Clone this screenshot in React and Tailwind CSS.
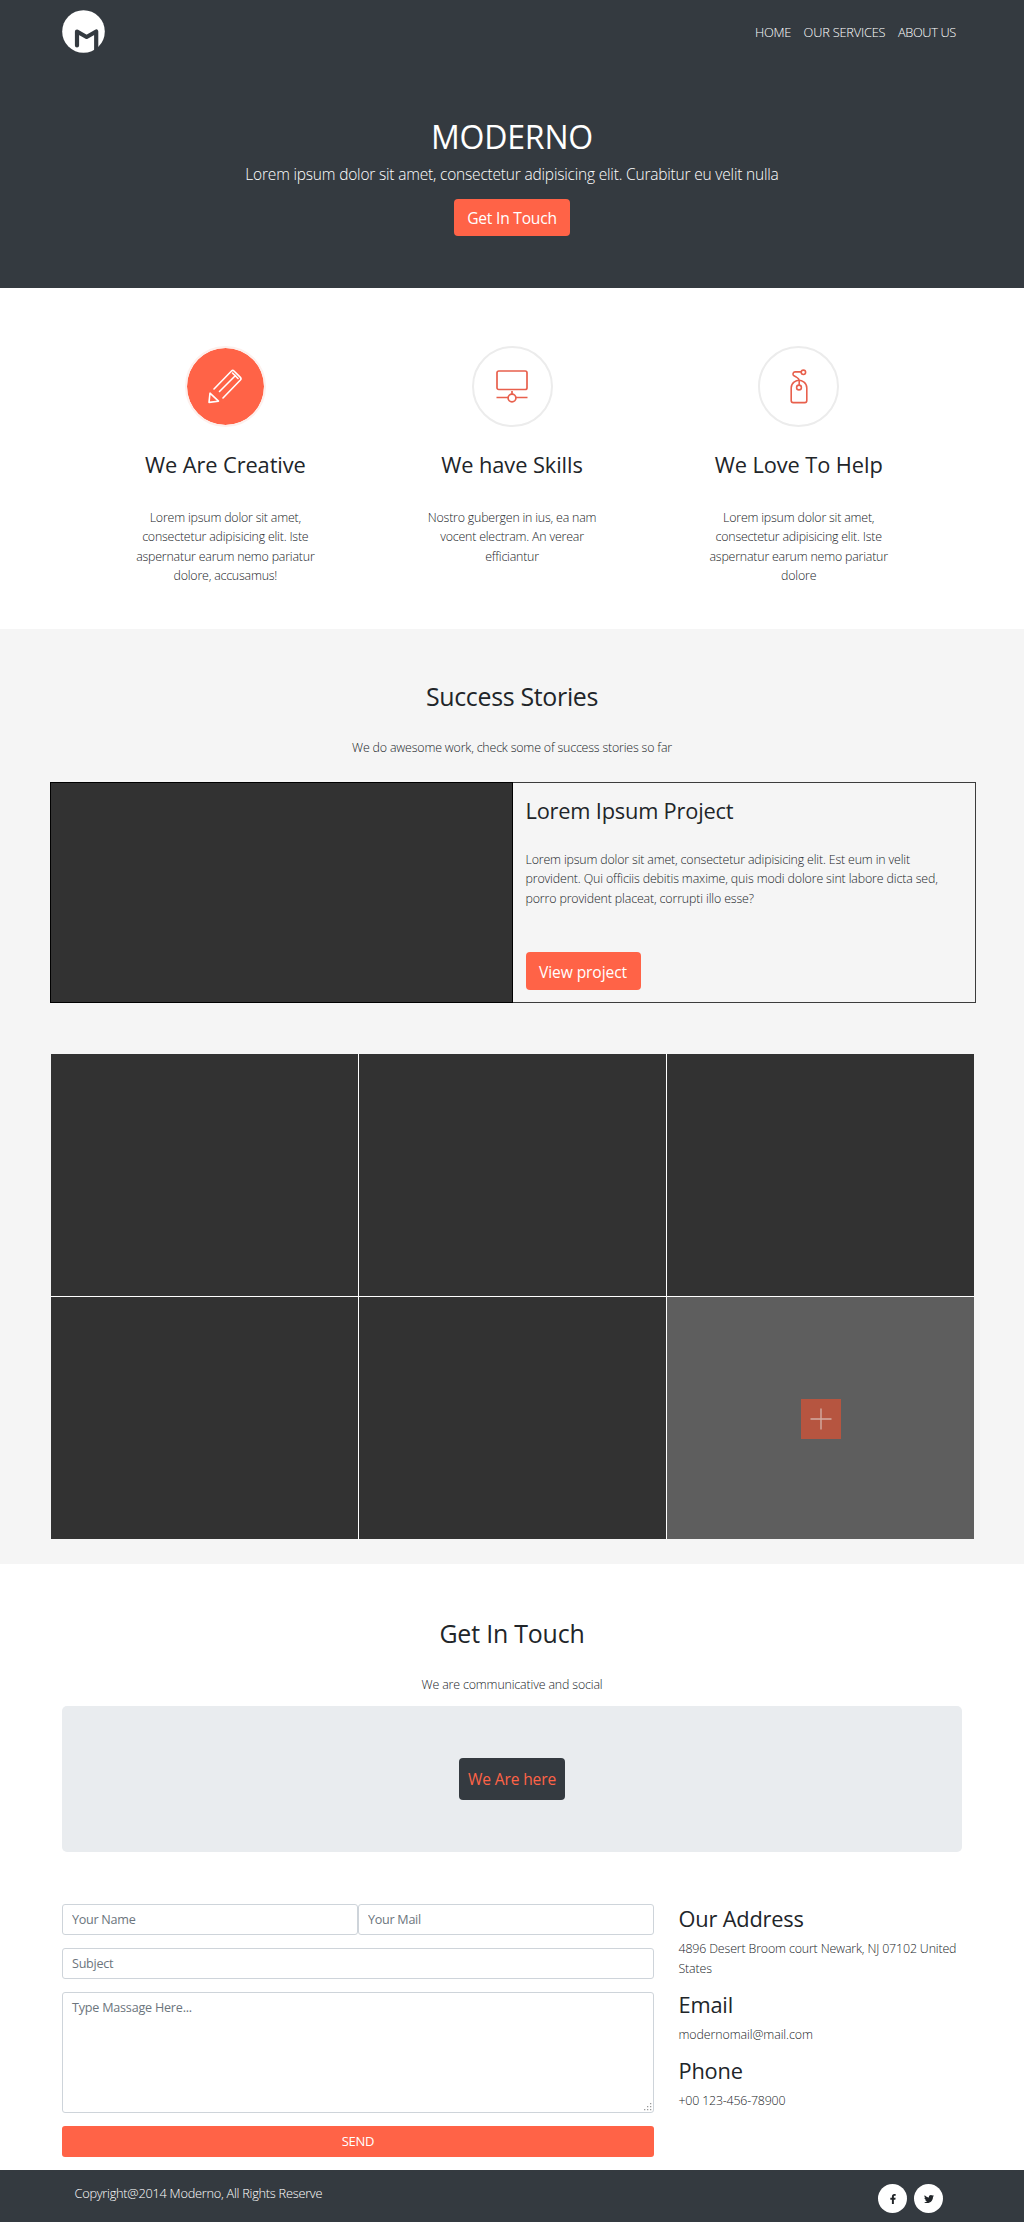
import React from "react";
import { FaFacebookF, FaTwitter } from "react-icons/fa";

function Logo() {
  return (
    <svg width="43" height="43" viewBox="0 0 43 43" fill="none">
      <circle cx="21.5" cy="21.5" r="21.3" fill="#fff" />
      <path
        d="M15 35.5V21.5L24.6 27L34.2 21.5V42"
        stroke="#343a40"
        strokeWidth="4.2"
        strokeLinecap="round"
        strokeLinejoin="round"
      />
    </svg>
  );
}

function PencilIcon() {
  return (
    <svg width="34" height="35" viewBox="0 0 34 35" fill="none" stroke="#fff" strokeWidth="1.6" strokeLinecap="round" strokeLinejoin="round">
      <path d="M6 20L23.5 2Q24.8 .8 26 2L32.4 8.4Q33.6 9.7 32.4 11L15 29" />
      <path d="M11.5 22.5L27.5 6.5M24.5 4L30 9.5" />
      <path d="M2 24.2L1 33.4L10.5 32.2Z" />
    </svg>
  );
}

function NetworkIcon() {
  return (
    <svg width="32" height="33" viewBox="0 0 32 33" fill="none" stroke="#e8604d" strokeWidth="1.7">
      <rect x="1" y="1" width="30" height="18.5" rx="1.8" />
      <path d="M16 21V24M.5 27.5H12M20 27.5H31.5" />
      <circle cx="16" cy="28" r="3.9" />
    </svg>
  );
}

function TagIcon() {
  return (
    <svg width="18" height="35" viewBox="0 0 18 35" fill="none" stroke="#e8604d" strokeWidth="1.6" strokeLinejoin="round">
      <path d="M1.2 19Q1.2 15.5 4 13.2Q9 9.2 14 13.2Q16.8 15.5 16.8 19V31.5Q16.8 33.6 14.8 33.6H3.2Q1.2 33.6 1.2 31.5Z" />
      <circle cx="9" cy="18.5" r="2.4" />
      <path d="M9.2 16V12Q9.2 9.6 6.8 8.4L4 6.8Q2.8 6 3 4.8Q3.2 3 5 2.9H11" />
      <circle cx="13.4" cy="3.3" r="2.2" />
    </svg>
  );
}

function Feature({ icon, active, title, lines }) {
  return (
    <div className="flex flex-1 flex-col items-center text-center">
      <div
        className={
          active
            ? "flex size-[81px] items-center justify-center rounded-full border-2 border-[#fdf0ed] bg-[#ff6347] bg-clip-padding"
            : "flex size-[81px] items-center justify-center rounded-full border-2 border-[#ececec]"
        }
      >
        {icon}
      </div>
      <h3 className="mt-[24px] text-[21.8px] leading-[27px] tracking-[-0.08px] text-[#212529]">{title}</h3>
      <p className="mt-[30px] text-[12.4px] leading-[19.5px] font-light tracking-[-0.2px] text-[#212529]">
        {lines.map((l) => (
          <span key={l} className="block whitespace-nowrap">{l}</span>
        ))}
      </p>
    </div>
  );
}

const fieldBox = "h-[31px] rounded-[3px] border border-[#ced4da] bg-white px-[9px] text-[12.6px] tracking-[-0.28px] text-[#212529] outline-none placeholder:text-[#6c757d]";
const bodyText = "text-[12.4px] leading-[19.5px] font-light text-[#212529]";
const infoTitle = "text-[21.8px] leading-[27px] text-[#212529] tracking-[-0.18px]";

export default function App() {
  return (
    <div className="h-[2222px] w-full overflow-hidden bg-white font-['Open_Sans','Noto_Sans',sans-serif] whitespace-nowrap">
      <header className="h-[287.5px] bg-[#343a40] text-white">
        <nav className="flex h-[63px] items-center justify-between pr-[68px] pl-[62px]">
          <Logo />
          <div className="flex gap-[12.5px] pt-[3px] text-[12.8px] leading-[19.5px] font-light">
            <a className="tracking-[-0.25px]">HOME</a>
            <a className="tracking-[-0.2px]">OUR SERVICES</a>
            <a className="tracking-[-0.35px]">ABOUT US</a>
          </div>
        </nav>
        <div className="flex flex-col items-center pt-[54px]">
          <h1 className="text-[32px] leading-[39px] tracking-[-0.2px]">MODERNO</h1>
          <p className="mt-[6px] text-[15.5px] leading-6 font-light tracking-[-0.19px]">
            Lorem ipsum dolor sit amet, consectetur adipisicing elit. Curabitur eu velit nulla
          </p>
          <button className="mt-[12.5px] h-[37.5px] w-[116px] rounded-[4px] bg-[#ff6347] pt-px text-[15.6px] leading-6 tracking-[-0.22px]">
            Get In Touch
          </button>
        </div>
      </header>

      <section className="flex h-[341.5px] px-[82px] pt-[58px]">
        <Feature
          active
          icon={<PencilIcon />}
          title="We Are Creative"
          lines={["Lorem ipsum dolor sit amet,", "consectetur adipisicing elit. Iste", "aspernatur earum nemo pariatur", "dolore, accusamus!"]}
        />
        <Feature
          icon={<NetworkIcon />}
          title="We have Skills"
          lines={["Nostro gubergen in ius, ea nam", "vocent electram. An verear", "efficiantur"]}
        />
        <Feature
          icon={<TagIcon />}
          title="We Love To Help"
          lines={["Lorem ipsum dolor sit amet,", "consectetur adipisicing elit. Iste", "aspernatur earum nemo pariatur", "dolore"]}
        />
      </section>

      <section className="flex h-[935px] flex-col items-center bg-[#f5f5f5] pt-[52px]">
        <h2 className="text-[24.9px] leading-[31px] tracking-[-0.3px] text-[#212529]">Success Stories</h2>
        <p className={"mt-[26px] tracking-[-0.18px] " + bodyText}>We do awesome work, check some of success stories so far</p>
        <div className="mt-[24px] ml-[1px] flex h-[221.5px] w-[926px] border border-[#3c3c3c]">
          <div className="-m-px w-[463px] border border-black bg-[#323232]" />
          <div className="flex flex-1 flex-col items-start pt-[14px] pl-[14px]">
            <h3 className="text-[21.8px] leading-[27px] tracking-[-0.2px] text-[#212529]">Lorem Ipsum Project</h3>
            <p className={"mt-[26px] " + bodyText}>
              <span className="block tracking-[-0.17px]">Lorem ipsum dolor sit amet, consectetur adipisicing elit. Est eum in velit</span>
              <span className="block tracking-[-0.14px]">provident. Qui officiis debitis maxime, quis modi dolore sint labore dicta sed,</span>
              <span className="block tracking-[-0.14px]">porro provident placeat, corrupti illo esse?</span>
            </p>
            <button className="mt-[44px] h-[37.5px] w-[115px] rounded-[4px] bg-[#ff6347] pt-[3px] text-[15.6px] leading-6 tracking-[-0.1px] text-white">
              View project
            </button>
          </div>
        </div>
        <div className="mt-[51px] ml-[1px] grid w-[923px] grid-cols-3 grid-rows-[242px_242px] gap-px bg-white">
          <div className="bg-[#323232]" />
          <div className="bg-[#323232]" />
          <div className="bg-[#323232]" />
          <div className="bg-[#323232]" />
          <div className="bg-[#323232]" />
          <div className="flex items-center justify-center bg-[#5e5e5e] pt-px">
            <div className="flex size-10 items-center justify-center bg-[#b65540]">
              <svg width="22" height="22" viewBox="0 0 22 22" stroke="#d3aca2" strokeWidth="1.4">
                <path d="M11 .5V21.5M.5 11H21.5" />
              </svg>
            </div>
          </div>
        </div>
      </section>

      <section className="h-[606px] pt-[54px]">
        <div className="flex flex-col items-center">
          <h2 className="text-[24.9px] leading-[31px] tracking-[-0.18px] text-[#212529]">Get In Touch</h2>
          <p className={"mt-[26px] tracking-[-0.15px] " + bodyText}>We are communicative and social</p>
          <div className="mt-[11.5px] flex h-[146px] w-[900px] items-center justify-center rounded-[5px] bg-[#e9ecef]">
            <div className="flex h-[42px] w-[106px] items-center justify-center rounded-[4px] bg-[#343a40] pt-px text-[15.6px] tracking-[-0.15px] text-[#ff6347]">
              We Are here
            </div>
          </div>
        </div>
        <div className="flex px-[62px] pt-[52px]">
          <form className="flex w-[592px] flex-col gap-[13px]">
            <div className="flex">
              <input className={"w-1/2 " + fieldBox} placeholder="Your Name" />
              <input className={"w-1/2 " + fieldBox} placeholder="Your Mail" />
            </div>
            <input className={fieldBox} placeholder="Subject" />
            <div className="relative h-[121px]">
              <textarea
                className="block size-full resize-none rounded-[3px] border border-[#ced4da] px-[9px] py-[4.5px] text-[12.6px] leading-[19.5px] tracking-[-0.22px] outline-none placeholder:text-[#6c757d]"
                placeholder="Type Massage Here..."
              />
              <svg className="absolute right-[2px] bottom-[2px]" width="8" height="8" viewBox="0 0 8 8" fill="#999">
                <path d="M6 0h1.3v1.3H6zM3 3h1.3v1.3H3zM6 3h1.3v1.3H6zM0 6h1.3v1.3H0zM3 6h1.3v1.3H3zM6 6h1.3v1.3H6z" />
              </svg>
            </div>
            <button type="button" className="h-[31px] rounded-[3px] bg-[#ff6347] text-[13px] tracking-[-0.28px] text-white">
              SEND
            </button>
          </form>
          <div className="pt-px pl-[24.5px]">
            <h3 className={infoTitle}>Our Address</h3>
            <p className={"mt-[7px] mb-[13px] tracking-[-0.15px] " + bodyText}>
              4896 Desert Broom court Newark, NJ 07102 United
              <br />
              States
            </p>
            <h3 className={infoTitle}>Email</h3>
            <p className={"mt-[7px] mb-[12.5px] tracking-[-0.09px] " + bodyText}>modernomail@mail.com</p>
            <h3 className={infoTitle}>Phone</h3>
            <p className={"mt-[7px] tracking-[-0.2px] " + bodyText}>+00 123-456-78900</p>
          </div>
        </div>
      </section>

      <footer className="flex h-[52px] items-start justify-between bg-[#343a40] pr-[81px] pl-[74.5px] text-white">
        <p className="pt-[13.5px] text-[12.8px] leading-[19.5px] font-light tracking-[-0.27px]">Copyright@2014 Moderno, All Rights Reserve</p>
        <div className="flex gap-[7px] pt-[14px] text-[#212529]">
          <a className="flex size-[29px] items-center justify-center rounded-full bg-white">
            <FaFacebookF size={10} />
          </a>
          <a className="flex size-[29px] items-center justify-center rounded-full bg-white">
            <FaTwitter size={10} />
          </a>
        </div>
      </footer>
    </div>
  );
}
